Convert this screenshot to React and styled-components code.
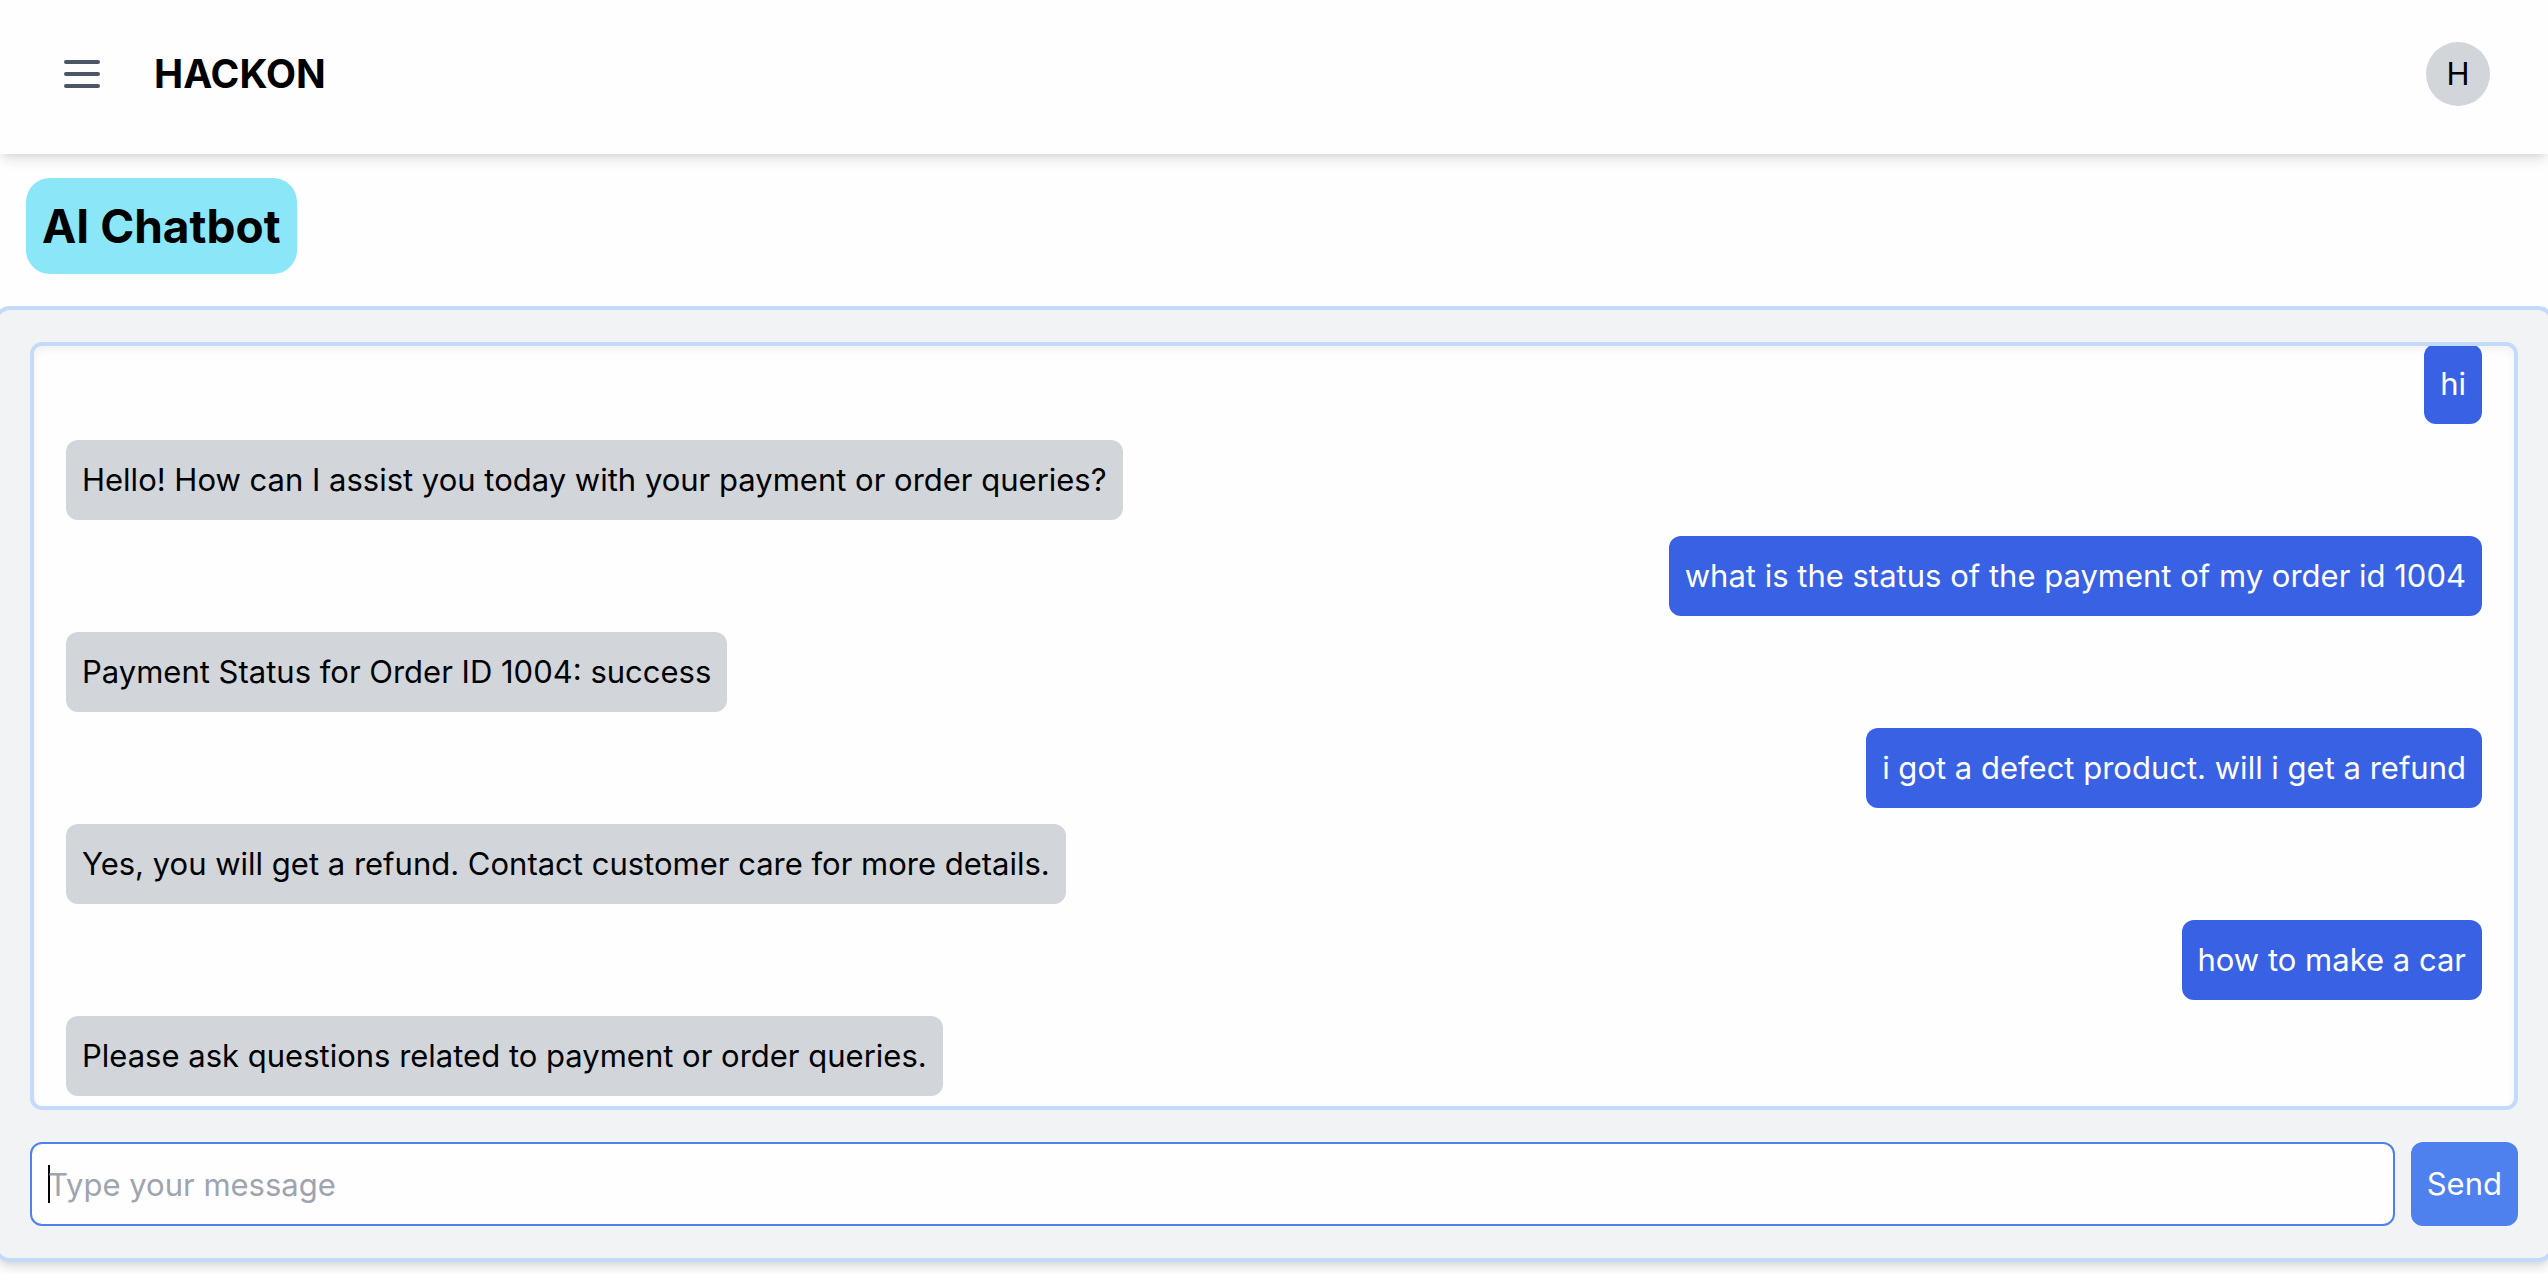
import React, { useState } from "react";
import styled, { createGlobalStyle } from "styled-components";

const GlobalStyle = createGlobalStyle`
  *, *::before, *::after { box-sizing: border-box; }
  body {
    margin: 0;
    background: #fefefe;
    color: #000;
    font-family: Inter, "Liberation Sans", sans-serif;
    font-size: 31px;
    line-height: 48px;
  }
  button, input { font: inherit; }
`;

const Page = styled.div`
  display: flex;
  flex-direction: column;
  height: 100vh;
  min-height: 640px;
  padding-bottom: 12px;
  overflow: hidden;
`;

const Header = styled.header`
  display: flex;
  align-items: center;
  gap: 48px;
  padding: 42px 58px 48px;
  background: #fefefe;
  box-shadow: 0 8px 12px -2px rgba(0, 0, 0, 0.1), 0 4px 8px -4px rgba(0, 0, 0, 0.1);
`;

const MenuButton = styled.button`
  display: flex;
  padding: 0;
  border: 0;
  background: none;
  color: #4b5563;
  cursor: pointer;
`;

const Brand = styled.h1`
  margin: 0;
  font-size: 39px;
  line-height: 56px;
  font-weight: 700;
`;

const Avatar = styled.button`
  width: 64px;
  height: 64px;
  margin-left: auto;
  padding: 0;
  border: 0;
  border-radius: 50%;
  background: #d2d5da;
  color: #000;
  cursor: pointer;
`;

const PageTitle = styled.h2`
  align-self: flex-start;
  margin: 24px 26px 32px;
  padding: 16px;
  border-radius: 24px;
  background: #8be6f8;
  font-size: 46px;
  line-height: 64px;
  font-weight: 700;
`;

const ChatPanel = styled.main`
  display: flex;
  flex: 1;
  flex-direction: column;
  gap: 32px;
  min-height: 0;
  margin: 0 -6px;
  padding: 32px;
  border: 4px solid #c3dafa;
  border-radius: 16px;
  background: #f2f3f5;
  box-shadow: 0 8px 12px -2px rgba(0, 0, 0, 0.1), 0 4px 8px -4px rgba(0, 0, 0, 0.1);
`;

const MessageList = styled.div`
  display: flex;
  flex: 1;
  flex-direction: column;
  justify-content: flex-end;
  gap: 16px;
  min-height: 0;
  padding: 0 32px 10px;
  overflow: hidden;
  border: 4px solid #c3dafa;
  border-radius: 12px;
  background: #fefefe;
  box-shadow: inset 0 4px 8px rgba(0, 0, 0, 0.05);
`;

const Bubble = styled.p`
  flex-shrink: 0;
  align-self: ${(p) => (p.$mine ? "flex-end" : "flex-start")};
  margin: 0;
  padding: 16px;
  border-radius: 12px;
  background: ${(p) => (p.$mine ? "#3862e3" : "#d2d5da")};
  color: ${(p) => (p.$mine ? "#fff" : "#000")};
`;

const Composer = styled.form`
  display: flex;
  gap: 16px;
`;

const MessageInput = styled.input`
  flex: 1;
  min-width: 0;
  height: 84px;
  padding: 16px;
  border: 2px solid #4e80ee;
  border-radius: 12px;
  outline: none;
  background: #fefefe;
  color: #000;
  &::placeholder { color: #9ea4b0; opacity: 1; }

  /* Steady insertion mark while the field is empty. */
  &:placeholder-shown {
    background: linear-gradient(#000, #000) 16px center / 2px 38px no-repeat #fefefe;
    caret-color: transparent;
  }
`;

const SendButton = styled.button`
  padding: 16px;
  border: 0;
  border-radius: 12px;
  background: #4e80ee;
  color: #fff;
  cursor: pointer;
`;

const initialMessages = [
  { mine: true, text: "hi" },
  { mine: false, text: "Hello! How can I assist you today with your payment or order queries?" },
  { mine: true, text: "what is the status of the payment of my order id 1004" },
  { mine: false, text: "Payment Status for Order ID 1004: success" },
  { mine: true, text: "i got a defect product. will i get a refund" },
  { mine: false, text: "Yes, you will get a refund. Contact customer care for more details." },
  { mine: true, text: "how to make a car" },
  { mine: false, text: "Please ask questions related to payment or order queries." },
];

export default function App() {
  const [messages, setMessages] = useState(initialMessages);
  const [draft, setDraft] = useState("");

  const send = (event) => {
    event.preventDefault();
    if (!draft.trim()) return;
    setMessages([...messages, { mine: true, text: draft }]);
    setDraft("");
  };

  return (
    <>
      <GlobalStyle />
      <Page>
        <Header>
          <MenuButton type="button" aria-label="Menu">
            <svg width="48" height="48" viewBox="0 0 24 24" fill="none" stroke="currentColor" strokeWidth="2" strokeLinecap="round">
              <path d="M4 6h16M4 12h16M4 18h16" />
            </svg>
          </MenuButton>
          <Brand>HACKON</Brand>
          <Avatar type="button">H</Avatar>
        </Header>
        <PageTitle>AI Chatbot</PageTitle>
        <ChatPanel>
          <MessageList>
            {messages.map((message, index) => (
              <Bubble key={index} $mine={message.mine}>{message.text}</Bubble>
            ))}
          </MessageList>
          <Composer onSubmit={send}>
            <MessageInput
              autoFocus
              type="text"
              aria-label="Message"
              placeholder="Type your message"
              value={draft}
              onChange={(event) => setDraft(event.target.value)}
            />
            <SendButton type="submit">Send</SendButton>
          </Composer>
        </ChatPanel>
      </Page>
    </>
  );
}
